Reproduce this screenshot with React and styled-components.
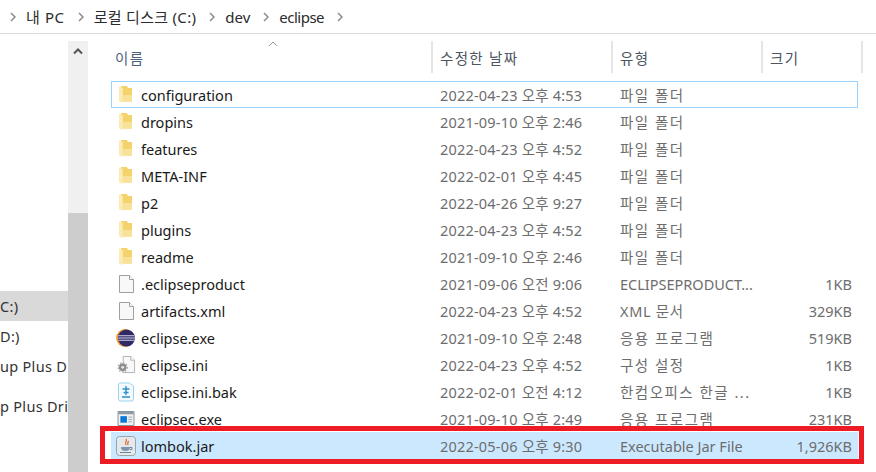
import { Fragment } from 'react';
import styled, { createGlobalStyle } from 'styled-components';

const GlobalStyle = createGlobalStyle`
  html, body {
    margin: 0;
    padding: 0;
    background: #fff;
    overflow: hidden;
  }
`;

const Window = styled.div`
  width: 876px;
  height: 472px;
  display: flex;
  flex-direction: column;
  overflow: hidden;
  font-family: "Noto Sans", "Noto Sans CJK KR", sans-serif;
  font-size: 14.5px;
  color: #1e1e1e;
`;
const Breadcrumb = styled.div`
  height: 33px;
  flex: none;
  display: flex;
  align-items: center;
  padding-left: 10px;
  border-bottom: 1px solid #d9d9d9;
`;
const Crumb = styled.span`
  margin: 0 13px 0 10px;
  font-size: 15px;
  color: #2b2b2b;
  line-height: 30px;
  letter-spacing: ${props => props.$spacing}px;
`;
const Body = styled.div`
  flex: 1;
  display: flex;
  min-height: 0;
  padding-top: 7px;
`;
const Sidebar = styled.div`
  width: 68px;
  flex: none;
  padding-top: 250px;
`;
const NavItem = styled.div`
  height: ${props => props.$height}px;
  display: flex;
  align-items: center;
  overflow: hidden;
  white-space: nowrap;
  letter-spacing: 0.3px;
  color: #333;
  background: ${props => (props.$active ? '#d9d9d9' : 'transparent')};
`;
const ScrollBar = styled.div`
  width: 20px;
  flex: none;
  display: flex;
  flex-direction: column;
  margin-right: 2px;
  background: #f0f0f0;
`;
const ScrollArrow = styled.div`
  height: 20px;
  flex: none;
  display: flex;
  align-items: center;
  justify-content: center;
  margin-bottom: 152px;
`;
const ScrollThumb = styled.div`
  flex: 1;
  background: #cdcdcd;
`;
const Main = styled.div`
  flex: 1;
  min-width: 0;
  padding-left: 21px;
`;
const Header = styled.div`
  height: 32px;
  display: grid;
  grid-template-columns: 322px 180px 150px 100px;
  position: relative;
  margin-bottom: 8px;
`;
const HeaderCell = styled.div`
  display: flex;
  align-items: center;
  padding-left: ${props => props.$pad || 7}px;
  border-right: 2px solid #e5e5e5;
  letter-spacing: 1.3px;
  color: ${props => (props.$first ? '#4c607a' : '#4c5560')};
`;
const SortMark = styled.svg`
  position: absolute;
  left: 157px;
  top: 0;
`;
const List = styled.div`
  width: 747px;
  display: flex;
  flex-direction: column;
`;
const RowBox = styled.div`
  height: 27px;
  box-sizing: border-box;
  display: grid;
  grid-template-columns: 321px 180px 150px 89px;
  align-items: center;
  position: relative;
  background: ${props => (props.$selected ? '#cce8ff' : 'transparent')};
  border: 1px solid ${props => (props.$focused ? '#99d1ff' : 'transparent')};
`;
const NameCell = styled.div`
  display: flex;
  align-items: center;
  min-width: 0;
`;
const IconSlot = styled.span`
  width: 28px;
  height: 24px;
  margin-right: 1px;
  flex: none;
  display: flex;
  align-items: center;
  justify-content: center;
`;
const FileName = styled.span`
  color: #1a1a1a;
  white-space: nowrap;
`;
const DateCell = styled.div`
  padding-left: 7px;
  letter-spacing: 0.2px;
  color: #6d6d6d;
  white-space: nowrap;
`;
const TypeCell = styled.div`
  padding-left: 7px;
  letter-spacing: ${props => props.$spacing || 0}px;
  color: #6d6d6d;
  white-space: nowrap;
  overflow: hidden;
`;
const SizeCell = styled.div`
  text-align: right;
  color: #6d6d6d;
`;
const RedFrame = styled.div`
  position: absolute;
  top: -7px;
  bottom: -6px;
  left: -12px;
  right: -7px;
  border: 5px solid #ed1c24;
  pointer-events: none;
`;

const Chevron = () => (
  <svg width="6" height="10" viewBox="0 0 6 10">
    <path d="M1 1l4 4-4 4" fill="none" stroke="#8a8a8a" strokeWidth="1.5" />
  </svg>
);

const FolderIcon = () => (
  <svg width="15" height="17" viewBox="0 0 15 17">
    <path d="M2 0h6l1 2h4v13.500H2z" fill="#f4d26c" />
    <path d="M4 9h9v6.500H4z" fill="#f8e198" />
    <path d="M0 .5l3.800 1.500V17L0 15.500z" fill="#fcebb4" />
  </svg>
);

const PageIcon = () => (
  <svg width="15" height="18" viewBox="0 0 15 18">
    <path d="M.5.5h10l4 4v13H.5z" fill="#f8f8f8" stroke="#a0a0a0" />
    <path d="M10.500.5v4h4" fill="#fff" stroke="#a0a0a0" />
  </svg>
);

const EclipseIcon = () => (
  <svg width="20" height="18" viewBox="0 0 22 20">
    <circle cx="10" cy="10" r="10" fill="#f39a2b" />
    <circle cx="11.500" cy="10" r="9.500" fill="#2d2a66" />
    <path d="M2.500 7.500h18M2 10h19M2.500 12.500h18" stroke="#d8d6ea" strokeWidth="1.300" />
  </svg>
);

const IniIcon = () => (
  <svg width="19" height="19" viewBox="0 0 20 20">
    <path d="M6.500 1.500h8l4 4v13h-12z" fill="#f8f8f8" stroke="#b0b0b0" />
    <path d="M14.500 1.500v4h4" fill="#fff" stroke="#b0b0b0" />
    <circle cx="6" cy="13" r="4" fill="#8c8c8c" />
    <circle cx="6" cy="13" r="4.800" fill="none" stroke="#a8a8a8" strokeWidth="1.400" strokeDasharray="1.600 1.600" />
    <circle cx="6" cy="13" r="1.500" fill="#e8e8e8" />
  </svg>
);

const BakIcon = () => (
  <svg width="18" height="20" viewBox="0 0 18 20">
    <path d="M2.500 1h10l4 3v13a2 2 0 0 1-2 2H3.500a2 2 0 0 1-2-2V2z" fill="#f3fafe" stroke="#9bd3ee" />
    <path d="M9 4v3M5.500 7h7M6.500 10.500h5M9 7v6M5 15h8" fill="none" stroke="#2f8fc9" strokeWidth="1.400" />
  </svg>
);

const ExeIcon = () => (
  <svg width="18" height="15" viewBox="0 0 18 16">
    <path d="M.5.5h17v15H.5z" fill="#f2f2f2" stroke="#7d8a98" />
    <path d="M1 1h16v2.500H1z" fill="#8d99a6" />
    <path d="M3 5.500h7v7H3z" fill="#0a78d8" />
    <path d="M11.500 6.500h4M11.500 9h4M11.500 11.500h4" stroke="#9aa4ae" />
  </svg>
);

const JarIcon = () => (
  <svg width="20" height="20" viewBox="0 0 20 20">
    <rect x=".5" y=".5" width="19" height="19" rx="3" fill="#e6e9ec" stroke="#9aa3ab" />
    <path d="M10 3c2 2-2 3 0 6M12 5c1 1-1 2 0 4" fill="none" stroke="#d9651f" strokeWidth="1.200" />
    <path d="M5 11h9v1c0 2-2 3-4.500 3S5 14 5 12z" fill="#7f95ad" />
    <path d="M14 11.500h2v2h-2M4 16.500h11" fill="none" stroke="#6d839b" />
  </svg>
);

const files = [
  { name: 'configuration', icon: <FolderIcon />, date: '2022-04-23 오후 4:53', type: '파일 폴더', spacing: 1.5, focused: true },
  { name: 'dropins', icon: <FolderIcon />, date: '2021-09-10 오후 2:46', type: '파일 폴더', spacing: 1.5 },
  { name: 'features', icon: <FolderIcon />, date: '2022-04-23 오후 4:52', type: '파일 폴더', spacing: 1.5 },
  { name: 'META-INF', icon: <FolderIcon />, date: '2022-02-01 오후 4:45', type: '파일 폴더', spacing: 1.5 },
  { name: 'p2', icon: <FolderIcon />, date: '2022-04-26 오후 9:27', type: '파일 폴더', spacing: 1.5 },
  { name: 'plugins', icon: <FolderIcon />, date: '2022-04-23 오후 4:52', type: '파일 폴더', spacing: 1.5 },
  { name: 'readme', icon: <FolderIcon />, date: '2021-09-10 오후 2:46', type: '파일 폴더', spacing: 1.5 },
  { name: '.eclipseproduct', icon: <PageIcon />, date: '2021-09-06 오전 9:06', type: 'ECLIPSEPRODUCT...', size: '1KB' },
  { name: 'artifacts.xml', icon: <PageIcon />, date: '2022-04-23 오후 4:52', type: 'XML 문서', spacing: 0.7, size: '329KB' },
  { name: 'eclipse.exe', icon: <EclipseIcon />, date: '2021-09-10 오후 2:48', type: '응용 프로그램', spacing: 1.5, size: '519KB' },
  { name: 'eclipse.ini', icon: <IniIcon />, date: '2022-04-23 오후 4:52', type: '구성 설정', spacing: 1.5, size: '1KB' },
  { name: 'eclipse.ini.bak', icon: <BakIcon />, date: '2022-02-01 오전 4:12', type: '한컴오피스 한글 ...', spacing: 1.5, size: '1KB' },
  { name: 'eclipsec.exe', icon: <ExeIcon />, date: '2021-09-10 오후 2:49', type: '응용 프로그램', spacing: 1.5, size: '231KB' },
  { name: 'lombok.jar', icon: <JarIcon />, date: '2022-05-06 오후 9:30', type: 'Executable Jar File', size: '1,926KB', selected: true },
];

const crumbs = [
  { label: '내 PC', spacing: 0.6 },
  { label: '로컬 디스크 (C:)', spacing: 0.3 },
  { label: 'dev', spacing: 0 },
  { label: 'eclipse', spacing: -0.5 },
];

const App = () => {
  return (
    <Window>
      <GlobalStyle />
      <Breadcrumb>
        <Chevron />
        {crumbs.map(crumb => (
          <Fragment key={crumb.label}>
            <Crumb $spacing={crumb.spacing}>{crumb.label}</Crumb>
            <Chevron />
          </Fragment>
        ))}
      </Breadcrumb>
      <Body>
        <Sidebar>
          <NavItem $height={30} $active>C:)</NavItem>
          <NavItem $height={30}>D:)</NavItem>
          <NavItem $height={30}>up Plus D</NavItem>
          <NavItem $height={50}>p Plus Dri</NavItem>
        </Sidebar>
        <ScrollBar>
          <ScrollArrow>
            <svg width="10" height="7" viewBox="0 0 10 7">
              <path d="M1 5.500l4-4 4 4" fill="none" stroke="#555" strokeWidth="2" />
            </svg>
          </ScrollArrow>
          <ScrollThumb />
        </ScrollBar>
        <Main>
          <Header>
            <HeaderCell $first $pad={4}>이름</HeaderCell>
            <HeaderCell>수정한 날짜</HeaderCell>
            <HeaderCell>유형</HeaderCell>
            <HeaderCell>크기</HeaderCell>
            <SortMark width="10" height="6" viewBox="0 0 10 6">
              <path d="M1 5l4-4 4 4" fill="none" stroke="#9a9a9a" />
            </SortMark>
          </Header>
          <List>
            {files.map(file => (
              <RowBox key={file.name} $focused={file.focused} $selected={file.selected}>
                <NameCell>
                  <IconSlot>{file.icon}</IconSlot>
                  <FileName>{file.name}</FileName>
                </NameCell>
                <DateCell>{file.date}</DateCell>
                <TypeCell $spacing={file.spacing}>{file.type}</TypeCell>
                <SizeCell>{file.size}</SizeCell>
                {file.selected && <RedFrame />}
              </RowBox>
            ))}
          </List>
        </Main>
      </Body>
    </Window>
  );
};

export default App;
